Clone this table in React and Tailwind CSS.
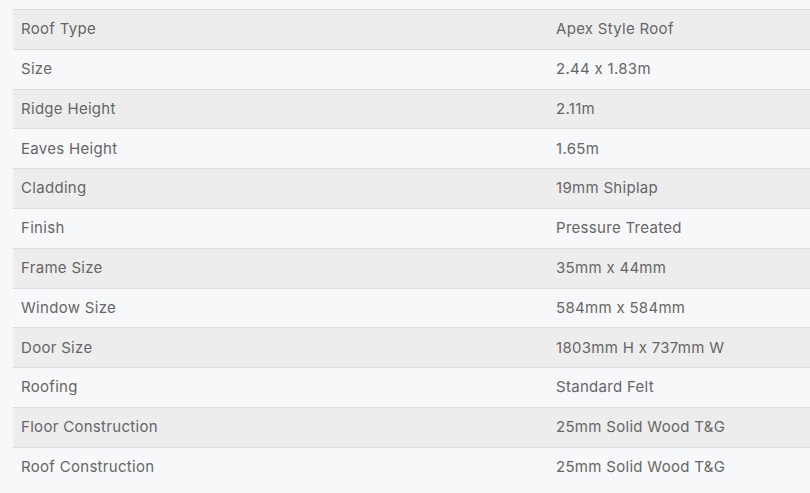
import React from 'react'

const specs = [
  ['Roof Type', 'Apex Style Roof'],
  ['Size', '2.44 x 1.83m'],
  ['Ridge Height', '2.11m'],
  ['Eaves Height', '1.65m'],
  ['Cladding', '19mm Shiplap'],
  ['Finish', 'Pressure Treated'],
  ['Frame Size', '35mm x 44mm'],
  ['Window Size', '584mm x 584mm'],
  ['Door Size', '1803mm H x 737mm W'],
  ['Roofing', 'Standard Felt'],
  ['Floor Construction', '25mm Solid Wood T&G'],
  ['Roof Construction', '25mm Solid Wood T&G'],
]

const App = () => {
  return (
    <div className="min-h-screen w-[810px] bg-[#f7f8f9] pt-[9px] pl-[13px] font-['Inter',sans-serif] text-[15px] tracking-[0.3px] text-[#666666] [font-feature-settings:'calt'_0]">
      <div className="border-t border-[#dcdcdc]">
        {specs.map(([label, value], i) => (
          <div
            key={label}
            className={
              i % 2 === 0
                ? 'flex h-[39.8px] items-center border-b border-[#dcdcdc] bg-[#ededee]'
                : i === specs.length - 1
                ? 'flex h-[39.8px] items-center'
                : 'flex h-[39.8px] items-center border-b border-[#dcdcdc]'
            }
          >
            <div className="w-[535px] pl-[8px]">{label}</div>
            <div className="pl-[8px]">{value}</div>
          </div>
        ))}
      </div>
    </div>
  )
}

export default App
